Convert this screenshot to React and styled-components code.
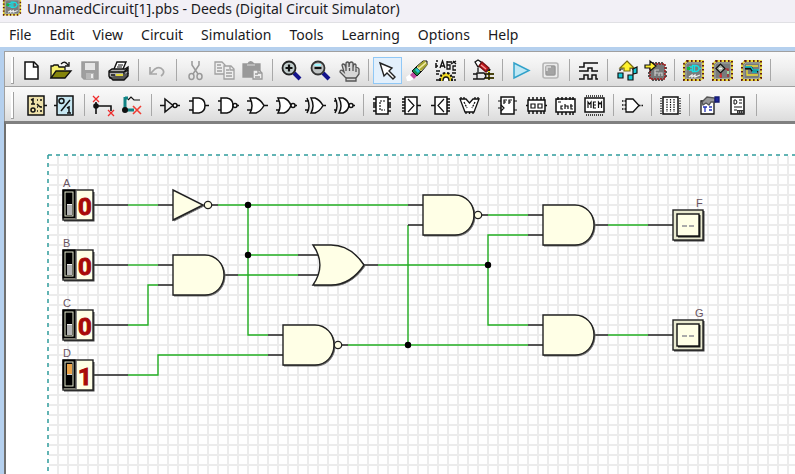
import React, { useState } from "react";
import styled, { createGlobalStyle } from "styled-components";

const GlobalStyle = createGlobalStyle`
  * { box-sizing: border-box; }
  body { margin: 0; overflow: hidden; background: #fff; }
  button { font: inherit; color: inherit; margin: 0; }
`;

const Window = styled.div`
  display: flex;
  flex-direction: column;
  height: 100vh;
  font-family: "Noto Sans", "Open Sans", sans-serif;
  color: #1a1a22;
`;

const TitleBar = styled.header`
  display: flex;
  align-items: flex-start;
  gap: 5px;
  flex: none;
  height: 23px;
  padding-left: 2px;
  background: #f2f0f6;
  border-bottom: 1px solid #e0e0e4;
`;

const Title = styled.h1`
  margin: 0;
  font-size: 14px;
  font-weight: 400;
  line-height: 18px;
  white-space: nowrap;
`;

const MenuBar = styled.nav`
  display: flex;
  flex: none;
  height: 24px;
  background: #fff;
`;

const MenuItem = styled.button`
  padding: 0 9px;
  border: 0;
  background: none;
  font-size: 14px;
  line-height: 22px;
  white-space: nowrap;
`;

const Frame = styled.main`
  display: flex;
  flex-direction: column;
  flex: 1;
  min-height: 0;
  border-top: 4px solid #b5d0ee;
  border-left: 4px solid #b5d0ee;
`;

const ToolRow = styled.div`
  display: flex;
  align-items: center;
  flex: none;
  height: 35px;
  padding: 2px 0 0 6px;
  border-top: 1px solid #a0a0a0;
  border-left: 1px solid #a0a0a0;
  background: linear-gradient(#fafafa, #f0f0f0 45%, #dcdcdc);
`;

const Grip = styled.span`
  width: 3px;
  height: 27px;
  margin-right: ${(p) => p.$space}px;
  border-right: 1px solid #a0a0a0;
  border-bottom: 1px solid #a0a0a0;
  background: #fff;
`;

const Separator = styled.span`
  flex: none;
  width: 1px;
  height: 22px;
  margin: 0 4px;
  background: #a8a8a8;
`;

const ToolButton = styled.button`
  display: flex;
  align-items: center;
  justify-content: center;
  flex: none;
  width: 29px;
  height: 27px;
  padding: 0;
  border: 1px solid ${(p) => (p.$active ? "#90c8f6" : "transparent")};
  background: ${(p) => (p.$active ? "#e3f0fc" : "transparent")};
`;

const IconSvg = styled.svg`
  display: block;
  flex: none;
  overflow: visible;
`;

const Canvas = styled.section`
  position: relative;
  flex: 1;
  min-height: 0;
  overflow: hidden;
  border-top: 3px solid #808080;
  border-left: 2px solid #707070;
  background: #fff;
  font-family: "Liberation Sans", sans-serif;
`;

const Sheet = styled.svg`
  display: block;
  width: 100%;
  height: 100%;
`;

const Pin = styled.button`
  position: absolute;
  left: ${(p) => p.$x}px;
  top: ${(p) => p.$y}px;
  width: 32px;
  height: 32px;
  padding: 0;
  border: 0;
  background: none;
`;

const PinLabel = styled.span`
  position: absolute;
  left: ${(p) => p.$x}px;
  top: ${(p) => p.$y}px;
  font-size: 11px;
  line-height: 12px;
  color: #6a5562;
`;

function Icon({ children, ...rest }) {
  return (
    <IconSvg width="23" height="23" viewBox="0 0 23 23" fill="none" stroke="#111" strokeWidth="1.5" aria-hidden="true" {...rest}>
      {children}
    </IconSvg>
  );
}

function ChipBase() {
  return (
    <>
      <path d="M5 2H21V19L18 21H2V5Z" fill="#7c8080" stroke="#ecdc3c" strokeWidth="1.800" />
      <path d="M5 2H21V19L18 21H2V5Z" fill="none" stroke="#5c1a12" strokeWidth="2" strokeDasharray="1.600 2.400" />
      <path d="M4 19.500V6L6 4H19.500V18L18 19.500Z" fill="#787c7c" stroke="#a4a8a4" strokeWidth="1" />
    </>
  );
}

function ChipFrame({ children }) {
  return <Icon><ChipBase />{children}</Icon>;
}

const deedsMark = (
  <>
    <path d="M10.500 6.500h2.500q4 0 4 3t-4 3h-2.500zM12.500 6.500v6M7 8h3M7 11h3M17 9.500h2" stroke="#16dfe4" strokeWidth="1.300" />
    <path d="M5 8h3v3h-3z" fill="#0db845" stroke="none" />
    <path d="M7 18l3-2v2l3-2v2l5-2" stroke="#f2f2f2" strokeWidth="1.300" />
  </>
);

const pinsV = (x1, x2) => <path d={`M${x1} 5h3M${x1} 9h3M${x1} 13h3M${x1} 17h3M${x2} 5h3M${x2} 9h3M${x2} 13h3M${x2} 17h3`} strokeWidth="1.5" />;
const pinsH = (y1, y2) => <path d={`M4 ${y1}v3M8 ${y1}v3M12 ${y1}v3M16 ${y1}v3M19 ${y1}v3M4 ${y2}v3M8 ${y2}v3M12 ${y2}v3M16 ${y2}v3M19 ${y2}v3`} strokeWidth="1.5" />;

const icons = {
  new: <Icon><path d="M4 3H13L17 7V20H4Z" fill="#fff" /><path d="M12.500 3V8H17" /></Icon>,
  open: (
    <Icon strokeWidth="1.300">
      <path d="M1 19V7H3L4 6H8L9 8H15V11" fill="#f6f06e" /><path d="M1 19L6 12H21L15 19Z" fill="#85850c" />
      <path d="M11 5Q15 1 18 6M19 3V7H15" />
    </Icon>
  ),
  save: (
    <Icon stroke="#9c9c9c">
      <path d="M3 3H19V20H5L3 18Z" fill="#9f9f9f" /><path d="M6 4H16V11H6Z" fill="#e5e5e5" stroke="none" /><path d="M7 14H15V20H7Z" fill="#b8b8b8" stroke="none" /><path d="M12 15H14V19H12Z" fill="#eee" stroke="none" />
    </Icon>
  ),
  print: (
    <Icon strokeWidth="1.400">
      <path d="M6 10L9 3H18L15 10" fill="#fff" /><path d="M10 6H15M9 8H14" strokeWidth="1" />
      <path d="M1 12L4 10H17L20 8V14L16 19H2L1 17Z" fill="#ababab" /><path d="M1 13H16V19M16 13L20 9" /><path d="M2 18L5 21H16L20 17V14" fill="#555" /><path d="M8 16H15" stroke="#e3d83a" strokeWidth="2" /><path d="M3 16H7M17 13L20 11" />
    </Icon>
  ),
  undo: <Icon stroke="#a7a7a7" strokeWidth="1.700"><path d="M4 8V15H11M4 15L9 10Q14 7 17 11Q19 14 15 17" /></Icon>,
  cut: <Icon stroke="#999" strokeWidth="1.500"><path d="M8 2V6L14 15M15 2V6L9 15M11.500 10V12" /><ellipse cx="7.500" cy="17.500" rx="2.500" ry="3" /><ellipse cx="15.500" cy="17.500" rx="2.500" ry="3" /></Icon>,
  copy: (
    <Icon stroke="#a0a0a0" strokeWidth="1.300">
      <path d="M2 3H9L12 6V15H2Z" fill="#eee" /><path d="M4 6H8M4 9H9M4 12H9" /><path d="M11 7H18L21 10V20H11Z" fill="#eee" /><path d="M17 7V11H21M13 11H16M13 14H19M13 17H19" />
    </Icon>
  ),
  paste: (
    <Icon stroke="#999" strokeWidth="1.300">
      <path d="M1 5H6Q7 2 10 3L12 5H18V18H1Z" fill="#999" /><path d="M5 6H13" stroke="#ccc" /><path d="M11 11H17L20 14V20H11Z" fill="#eee" /><path d="M13 15H16M13 18H18M16 11V14H20" />
    </Icon>
  ),
  zoomIn: <Icon><path d="M14 14L20 20" stroke="#14148c" strokeWidth="4" /><circle cx="9" cy="9" r="6.500" fill="#c0cccb" strokeWidth="1.800" stroke="#222" /><path d="M5.500 9H12.500M9 5.500V12.500" strokeWidth="2.200" /></Icon>,
  zoomOut: <Icon><path d="M14 14L20 20" stroke="#14148c" strokeWidth="4" /><circle cx="9" cy="9" r="6.500" fill="#c0c4c4" strokeWidth="1.800" stroke="#333" /><path d="M5.500 6H12" stroke="#9ff6ff" strokeWidth="2" /><path d="M5.500 9H12.500" strokeWidth="2.200" /></Icon>,
  hand: (
    <Icon stroke="#555" strokeWidth="1.300">
      <path d="M6 13L4 6Q5 4 7 6L8 9V4Q9.500 2 11 4V8L11.500 4Q13.500 2 15 4V9L15.500 6Q17 4 18 6V9Q20 8 21 10V15L18 19V22H8V19L2 13Q2 10 5 12Z" fill="#d7d7d7" /><path d="M8 9V12M11.500 9V12M15 9V12M18 10V13M8 19H18" />
    </Icon>
  ),
  arrow: <Icon stroke="#222" strokeWidth="1.400"><path d="M4 4L16 9L13 12L19 18L17 20L11 14L8 17Z" fill="#fff" /></Icon>,
  erase: (
    <Icon strokeWidth="1">
      <path d="M1 18L8 13L12 18L5 22H2Z" fill="#fff" stroke="none" /><path d="M5 16L10 11L14 15L9 20Z" fill="#bd4ba0" stroke="none" /><path d="M7 12L12 7L17 12L12 17Z" fill="#178b49" /><path d="M11 8L18 2H22V6L16 13Z" fill="#efe9a4" /><path d="M13 8L20 2M15 11L22 5" stroke="#a6a430" strokeWidth="2" /><path d="M11 10L14 13" stroke="#25c4cf" strokeWidth="3" />
    </Icon>
  ),
  labels: (
    <Icon strokeWidth="1.300">
      <path d="M6 9L8.500 2L11 9M7 7H10M13 2V10H16V6H13M22 7H19V11H22M13 3H18M19 2L22 5M22 2L17 5" />
      <path d="M2 4V9M2 7H4M2 12H6M2 15H5M18 14H22M18 18H21M2 2H4M2 21H5M20 21H22" strokeWidth="1.500" />
      <path d="M6 22Q6 14 12 14Q18 14 18 22" fill="#efd824" strokeWidth="2" strokeDasharray="2.500 1.500" /><path d="M9 22Q9 18 12 18Q15 18 15 22" fill="#fff" />
    </Icon>
  ),
  probe: (
    <Icon strokeWidth="1.300">
      <path d="M3 3L6 1L9 3L10 7L6 8Z" fill="#fff" /><path d="M7 7L10 3L17 9L14 13Z" fill="#c6181c" stroke="#721014" /><path d="M9 6L14 10" stroke="#f0a0a0" /><path d="M16 13L18 10" strokeWidth="2" />
      <path d="M13 15H22M17 12V21M13 19H22" stroke="#f4de17" strokeWidth="2" /><path d="M5 14H12L14 17L12 20H5ZM1 20H5M1 15H5M13 15H22M17 13V21M13 19H22M6 9V13" />
    </Icon>
  ),
  play: <Icon stroke="#32a2ca"><path d="M4 4L19 11.500L4 19Z" fill="#bfe8f5" /></Icon>,
  stop: <Icon stroke="#b5b5b5"><rect x="4" y="4" width="15" height="15" rx="2" fill="#ececec" strokeWidth="1.600" /><rect x="7" y="7" width="9" height="9" rx="1" fill="#a4a4a4" stroke="#999" /><path d="M8 12V8H12" stroke="#ddd" /></Icon>,
  timing: <Icon strokeWidth="1.500"><path d="M2 8H7V4H21M2 12H11V9H15V12H21M2 20H7V16H11V20H15V16H19V20H21" /></Icon>,
  exportUp: (
    <Icon strokeWidth="1.200">
      <path d="M5 12V10H8M18 11V9H15" /><path d="M12 2L19 9H15V12H9V9H5Z" fill="#fff22c" stroke="#776a10" /><path d="M3 14H8V19H3ZM13 16H18V21H13ZM18 10L22 8V14L18 15Z" fill="#18cbd7" />
    </Icon>
  ),
  exportChip: (
    <Icon strokeWidth="1.200">
      <path d="M9 3V6M12 3V6M15 3V6M18 3V6M9 20V22M12 20V22M15 20V22M18 20V22M4 14H7M4 17H7M21 9H23M21 13H23M21 17H23" stroke="#222" strokeWidth="1.500" />
      <path d="M6 5H21V20H6Z" fill="#757777" stroke="#a01818" strokeWidth="1.500" strokeDasharray="2 1" />
      <path d="M11 17V11H15M11 14H14M15 17V14H18V17" stroke="#ccc" /><path d="M1 6H6V2L12 7L6 12V9H1Z" fill="#ffef2e" />
    </Icon>
  ),
  deeds: <ChipFrame>{deedsMark}</ChipFrame>,
  fsm: <ChipFrame><path d="M5 9.500L9.500 5L14 9.500L9.500 14Z" fill="#a9b2a5" strokeWidth="1.200" /><path d="M8 9.500H11" stroke="#eee" /><path d="M10 14V19M14 10H17V18" stroke="#b81c1f" strokeWidth="1.200" /><circle cx="9.500" cy="17" r="1.200" fill="#e53030" stroke="none" /><path d="M16 12H18V15H16Z" fill="#9fd49f" stroke="none" /></ChipFrame>,
  board: <ChipFrame><path d="M6 7H18M18 16H7V11" stroke="#f0dc33" strokeWidth="1.300" /><path d="M5 9H11L13 12H18" stroke="#111" strokeWidth="3" /><path d="M5 8H11L13 11H19M12 13H17" stroke="#14cbd5" strokeWidth="1.300" /></ChipFrame>,

  inputs: <Icon><path d="M3 2H19V21H3Z" fill="#eee1aa" /><path d="M19 11.500H22M6 6L8 5V10M6 10H10M12 6H13M15 6H17M12 10L15 13M12 13H13M16 12V14M15 17H17M12 17H13" /><circle cx="8" cy="16" r="2" /></Icon>,
  outputs: <Icon><path d="M3 2H19V21H3Z" fill="#c6e6f1" /><path d="M0 11.500H3M7 17L16 6M13 14L15 13V19M13 19H17" /><circle cx="7.500" cy="7" r="2.500" /></Icon>,
  wire: <Icon strokeWidth="1.600"><path d="M4 8V20M4 12H19V17" /><circle cx="4" cy="12" r="2" fill="#111" /><path d="M1 2L7 8M7 2L1 8M16 16L22 22M22 16L16 22" stroke="#ef2c2c" strokeWidth="1.300" /></Icon>,
  bus: <Icon><path d="M4 3V18M4 4H7M4 16H13" stroke="#118384" strokeWidth="3" /><circle cx="4" cy="16" r="3" fill="#111" stroke="none" /><path d="M7 6L10 3L13 6H19" strokeWidth="1.200" /><path d="M12 12L20 20M20 12L12 20" stroke="#ef3c32" strokeWidth="1.600" /></Icon>,
  not: <Icon><path d="M1 11.500H6V5L14 11.500L6 18V11.500M18 11.500H21" /><circle cx="16" cy="11.500" r="2" fill="#fff" /></Icon>,
  and: <Icon><path d="M5 4H11Q17 5 17 11.500T11 19H5Z" fill="#fff" /><path d="M1 7H5M1 16H5M17 11.500H21" /></Icon>,
  nand: <Icon><path d="M4 4H10Q16 5 16 11.500T10 19H4Z" fill="#fff" /><path d="M1 7H4M1 16H4M20 11.500H22" /><circle cx="18" cy="11.500" r="2" fill="#fff" /></Icon>,
  or: <Icon><path d="M4 4H10Q15 6 18 11.500Q15 17 10 19H4Q8 12 4 4Z" fill="#fff" /><path d="M1 7H5M1 16H5M18 11.500H22" /></Icon>,
  nor: <Icon><path d="M3 4H9Q14 6 16 11.500Q14 17 9 19H3Q7 12 3 4Z" fill="#fff" /><path d="M1 7H4M1 16H4M20 11.500H22" /><circle cx="18" cy="11.500" r="2" fill="#fff" /></Icon>,
  xor: <Icon><path d="M7 4H11Q16 6 19 11.500Q16 17 11 19H7Q11 12 7 4Z" fill="#fff" /><path d="M3 4Q7 12 3 19M1 7H5M1 16H5M19 11.500H22" /></Icon>,
  xnor: <Icon><path d="M6 4H10Q15 6 16 11.500Q15 17 10 19H6Q10 12 6 4Z" fill="#fff" /><path d="M2 4Q6 12 2 19M1 7H4M1 16H4M20 11.500H22" /><circle cx="18" cy="11.500" r="2" fill="#fff" /></Icon>,
  combo: <Icon><path d="M5 3H17V20H5Z" fill="#fff" />{pinsV(2, 17)}<path d="M2 11H5M17 11H20" /><path d="M14 7H9V16H14" strokeWidth="1.200" strokeDasharray="2 1" /></Icon>,
  mux: <Icon><path d="M5 3H17V20H5Z" fill="#fff" /><path d="M2 5H5M2 8H5M2 11H5M2 14H5M2 17H5M17 11.500H21" /><path d="M8 5L14 11.500L8 18" strokeWidth="1.200" /></Icon>,
  demux: <Icon><path d="M6 3H18V20H6Z" fill="#fff" /><path d="M2 11.500H6M18 5H21M18 8H21M18 11H21M18 14H21M18 17H21" /><path d="M15 5L9 11.500L15 18" strokeWidth="1.200" /></Icon>,
  alu: <Icon strokeWidth="1.300"><path d="M2 5H8L11.500 9L15 5H21L16 18H7Z" fill="#fff" /><path d="M3 3V5M6 3V5M17 3V5M20 3V5M8 18V20M11.500 18V20M15 18V20" /><path d="M6 8L9 14M17 8L14 14" strokeDasharray="2 1" /></Icon>,
  flip: <Icon><path d="M5 3H18V20H5Z" fill="#fff" /><path d="M2 7H5M2 14H5M18 7H21M18 16H21M5 11L8 14L5 17M8 10V6H11M8 8H10M13 10V6H16M13 8H15" strokeWidth="1.200" /></Icon>,
  counter: <Icon><path d="M3 6H20V17H3Z" fill="#fff" />{pinsH(3, 17)}<path d="M1 11.500H3M20 11.500H22" /><path d="M6 10H10V14H6ZM13 10H17V14H13Z" strokeWidth="1.200" /></Icon>,
  cnt: <Icon><path d="M2 5H21V18H2Z" fill="#fff" />{pinsH(3, 18)}<path d="M9 12H7V15H9M11 10V15M11 12H14V15M17 10V15H19M16 12H19M4 8H7" strokeWidth="1.200" /></Icon>,
  mem: <Icon><path d="M2 4H21V18H2Z" fill="#fff" /><path d="M3 2H21M3 21H21" strokeDasharray="1 1" /><path d="M5 14V8L6.500 10L8 8V14M13 8H10.500V14H13M10.500 11H13M15.500 14V8L17 10L18.500 8V14" strokeWidth="1.200" /></Icon>,
  custom: <Icon strokeWidth="1.300"><path d="M5 5H12L18 11.500L12 18H5Z" fill="#fff" /><path d="M1 7H5M1 11H5M1 15H5M18 11.500H23" strokeDasharray="1.500 1" /></Icon>,
  table: <Icon><path d="M4 3H19V20H4Z" fill="#fff" /><path d="M2 4V20M21 4V20" strokeDasharray="1 1.500" /><path d="M8 5V9M11.500 5V9M15 5V9M8 10V14M11.500 10V14M15 10V14M8 15V18M11.500 15V18M15 15V18" strokeWidth="1.200" strokeDasharray="1.500 1" /></Icon>,
  textTool: <Icon strokeWidth="1.300"><path d="M4 7H17V20H4Z" fill="#fff" /><path d="M5 8L10 3L18 4V8L14 8L12 11L9 9L6 11Z" fill="#999" stroke="#555" /><path d="M18 3H22V8H18Z" fill="#1f269c" stroke="#151b70" /><path d="M6 13H10M8 13V18M12 13H15M12 16H15" stroke="#2634b7" /></Icon>,
  doc: <Icon><path d="M5 3H18V20H5Z" fill="#fff" /><path d="M8 6V10H10L11 8L10 6ZM13 6H16M13 9H16M8 13H16M8 16H11" strokeWidth="1" /><path d="M11 16H18V20H11Z" fill="#333" stroke="none" /><path d="M12 18H17" stroke="#ddd" strokeWidth="1" strokeDasharray="1 1" /></Icon>,
};

const topTools = [
  [["new", "New"], ["open", "Open"], ["save", "Save"], ["print", "Print"]],
  [["undo", "Undo"]],
  [["cut", "Cut"], ["copy", "Copy"], ["paste", "Paste"]],
  [["zoomIn", "Zoom in"], ["zoomOut", "Zoom out"], ["hand", "Pan"]],
  [["arrow", "Select"], ["erase", "Erase"], ["labels", "Labels"]],
  [["probe", "Probe"]],
  [["play", "Start simulation"], ["stop", "Stop simulation"]],
  [["timing", "Timing diagram"]],
  [["exportUp", "Export block"], ["exportChip", "Export to FPGA"]],
  [["deeds", "Digital Circuit Simulator"], ["fsm", "Finite State Machine Simulator"], ["board", "Micro Computer Emulator"]],
];

const partTools = [
  [["inputs", "Inputs"], ["outputs", "Outputs"]],
  [["wire", "Wire"], ["bus", "Bus"]],
  [["not", "NOT"], ["and", "AND"], ["nand", "NAND"], ["or", "OR"], ["nor", "NOR"], ["xor", "XOR"], ["xnor", "XNOR"]],
  [["combo", "Decoders"], ["mux", "Multiplexers"], ["demux", "Demultiplexers"], ["alu", "Arithmetic"]],
  [["flip", "Flip-flops"], ["counter", "Registers"], ["cnt", "Counters"], ["mem", "Memories"]],
  [["custom", "Custom block"]],
  [["table", "State machine"]],
  [["textTool", "Text"], ["doc", "Document"]],
];

function Toolbar({ groups, space, active, onPick, label }) {
  return (
    <ToolRow role="toolbar" aria-label={label}>
      <Grip $space={space} />
      {groups.map((group, i) => (
        <React.Fragment key={i}>
          {group.map(([id, name]) => (
            <ToolButton key={id} type="button" aria-label={name} title={name} $active={active === id} onClick={() => onPick(id)}>
              {icons[id]}
            </ToolButton>
          ))}
          <Separator />
        </React.Fragment>
      ))}
    </ToolRow>
  );
}

const netWires = [
  "M128 205H158", "M218 205H408", "M128 265H158", "M128 325H148V285H158", "M128 375H158V355H268",
  "M248 205V335H268", "M248 255H298", "M238 275H298", "M348 345H528", "M408 345V225", "M378 265H488",
  "M488 215H528", "M528 235H488V325H528", "M608 225H648", "M608 335H648",
];

const leads = [
  "M94 205H128M158 205H173M212 205H218", "M94 265H128M158 265H173", "M94 325H128M158 285H173M224 275H238",
  "M94 375H128M268 355H283M268 335H283", "M298 255H320M298 275H320M364 265H378", "M342 345H348M408 205H423M408 225H423",
  "M482 215H488M528 215H543M528 235H543M594 225H608M648 225H673", "M528 325H543M528 345H543M594 335H608M648 335H673",
];

const junctions = [[248, 205], [248, 255], [408, 345], [488, 265]];
const andGates = [[173, 255], [543, 205], [543, 315], [423, 195, true], [283, 325, true]];

function Body({ d }) {
  return (
    <>
      <path d={d} transform="translate(1 1)" fill="#555" stroke="#777" strokeWidth="1" />
      <path d={d} fill="#ffffe6" stroke="#222" strokeWidth="1.400" />
    </>
  );
}

function Bubble({ x, y }) {
  return <circle cx={x} cy={y} r="3.700" fill="#ffffe6" stroke="#222" strokeWidth="1.300" />;
}

function Circuit() {
  return (
    <Sheet role="img" aria-label="Logic circuit">
      <defs>
        <pattern id="grid" x="48" y="155" width="10" height="10" patternUnits="userSpaceOnUse">
          <path d="M0 0H10M0 10H10M0 0V10M10 0V10" stroke="#ececec" strokeWidth="2" />
        </pattern>
      </defs>
      <g transform="translate(-6 -124)" fill="none">
        <rect x="48" y="155" width="4000" height="4000" fill="url(#grid)" />
        <path d="M48 4000V155H4000" stroke="#fff" strokeWidth="2" />
        <path d="M48 155H4000M48 155V4000" stroke="#2f9c9c" strokeWidth="1.500" strokeDasharray="4 4" />
        <g stroke="#25b025" strokeWidth="1.400">{netWires.map((d) => <path key={d} d={d} />)}</g>
        <g stroke="#222" strokeWidth="1.400">{leads.map((d) => <path key={d} d={d} />)}</g>
        {junctions.map(([x, y]) => <circle key={`${x}-${y}`} cx={x} cy={y} r="3.200" fill="#000" />)}
        <Body d="M173 190L203 205L173 220Z" />
        <Bubble x={208} y={205} />
        {andGates.map(([x, y, inverted]) => (
          <React.Fragment key={`${x}-${y}`}>
            <Body d={`M${x} ${y}H${x + 32}C${x + 43} ${y} ${x + 51} ${y + 9} ${x + 51} ${y + 20}C${x + 51} ${y + 31} ${x + 43} ${y + 40} ${x + 32} ${y + 40}H${x}Z`} />
            {inverted && <Bubble x={x + 55} y={y + 20} />}
          </React.Fragment>
        ))}
        <Body d="M313 245H331C347 245 358 256 364 265C358 274 347 285 331 285H313C322 272 322 258 313 245Z" />
        {[210, 320].map((y) => (
          <g key={y}>
            <rect x="674" y={y + 1} width="30.500" height="30.500" fill="#444" />
            <rect x="673" y={y} width="30" height="30" fill="#e9ead0" stroke="#222" strokeWidth="1.400" />
            <rect x="678" y={y + 5} width="22.500" height="22.500" fill="#222" />
            <rect x="677" y={y + 4} width="22" height="22" fill="#ffffe6" stroke="#111" strokeWidth="1.400" />
            <path d={`M682 ${y + 16}H687M689 ${y + 16}H694`} stroke="#aaa" strokeWidth="2" />
          </g>
        ))}
      </g>
    </Sheet>
  );
}

const Digit = styled.text`
  font: bold 24px Roboto, "Liberation Sans", sans-serif;
  fill: #a80a0a;
  stroke: #a80a0a;
  stroke-width: 1px;
`;

function InputSwitch({ name, y, initial }) {
  const [on, setOn] = useState(initial);
  return (
    <>
      <PinLabel $x={57} $y={y - 13}>{name}</PinLabel>
      <Pin type="button" role="switch" aria-checked={on} aria-label={name} $x={56} $y={y} onClick={() => setOn(!on)}>
        <IconSvg width="32" height="32" viewBox="0 0 32 32">
          <rect x="2" y="2" width="30.500" height="29.500" fill="#444" />
          <rect x="1" y="0" width="30" height="30" fill="#ffffe6" stroke="#222" strokeWidth="1.400" />
          <rect x="13" y="1" width="2" height="28" fill="#888" />
          <rect x="1" y="0" width="12" height="28" fill="#000" stroke="#000" strokeWidth="1" />
          <rect x="3" y="2" width="8" height="24" fill="#000" stroke="#e4e8cc" strokeWidth="1" />
          <rect x="5" y="4" width="5" height="10" fill={on ? "#eba348" : "#000"} />
          <rect x="5" y="14" width="5" height="11" fill={on ? "#000" : "#b4b4b4"} />
          <path d="M5 14.500H10" stroke={on ? "#ccc" : "#eee"} strokeWidth="1" />
          <Digit x="16" y="25">{on ? "1" : "0"}</Digit>
        </IconSvg>
      </Pin>
    </>
  );
}

const menus = ["File", "Edit", "View", "Circuit", "Simulation", "Tools", "Learning", "Options", "Help"];

export default function App() {
  const [tool, setTool] = useState("arrow");
  return (
    <>
      <GlobalStyle />
      <Window>
        <TitleBar>
          <IconSvg width="20" height="20" viewBox="0 4 23 23" aria-hidden="true">
            <ChipBase />
            <g fill="none">{deedsMark}</g>
          </IconSvg>
          <Title>UnnamedCircuit[1].pbs - Deeds (Digital Circuit Simulator)</Title>
        </TitleBar>
        <MenuBar>{menus.map((m) => <MenuItem key={m} type="button">{m}</MenuItem>)}</MenuBar>
        <Frame>
          <Toolbar label="Main" groups={topTools} space={4} active={tool} onPick={setTool} />
          <Toolbar label="Components" groups={partTools} space={8} active={tool} onPick={setTool} />
          <Canvas>
            <Circuit />
            <InputSwitch name="A" y={66} initial={false} />
            <InputSwitch name="B" y={126} initial={false} />
            <InputSwitch name="C" y={186} initial={false} />
            <InputSwitch name="D" y={236} initial={true} />
            <PinLabel $x={690} $y={73}>F</PinLabel>
            <PinLabel $x={689} $y={183}>G</PinLabel>
          </Canvas>
        </Frame>
      </Window>
    </>
  );
}
